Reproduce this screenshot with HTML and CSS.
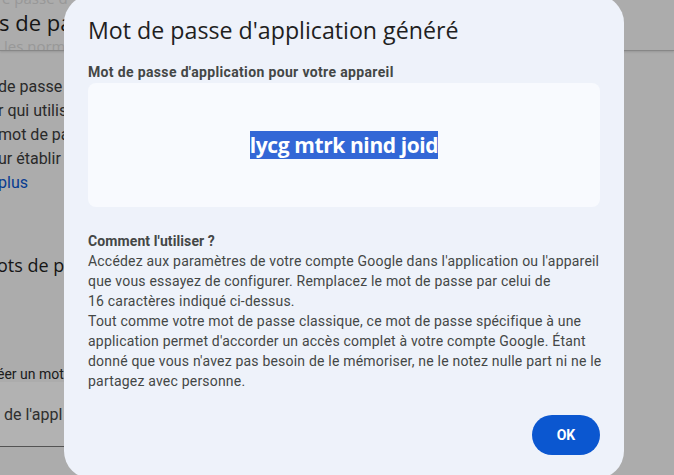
FILE: index.html
```html
<!DOCTYPE html>
<html lang="fr">
<head>
<meta charset="utf-8">
<title>Mot de passe d'application généré</title>
<link rel="stylesheet" href="styles.css">
</head>
<body>
<div class="page">
  <header class="topbar">
    <div class="ghost ghost-top">e passe d</div>
    <h1 class="page-title">s de pa</h1>
    <div class="ghost ghost-bottom">les norm</div>
  </header>
  <main class="content">
    <p class="intro">de passe<br>r qui utilis<br>mot de pas<br>ur établir<br><a class="link" href="#">plus</a></p>
    <h2 class="section-title">ots de pa</h2>
    <div class="field-label">éer un mot</div>
    <div class="field"><span class="field-text">de l'appl</span></div>
  </main>
</div>
<div class="scrim"></div>
<div class="dialog" role="dialog">
  <h2 class="dialog-title">Mot de passe d'application généré</h2>
  <div class="label">Mot de passe d'application pour votre appareil</div>
  <div class="password-box"><span class="password">lycg mtrk nind joid</span></div>
  <div class="howto">
    <div class="howto-title">Comment l'utiliser ?</div>
    <p class="howto-text">Accédez aux paramètres de votre compte Google dans l'application ou l'appareil<br>que vous essayez de configurer. Remplacez le mot de passe par celui de<br>16 caractères indiqué ci-dessus.</p>
    <p class="howto-text">Tout comme votre mot de passe classique, ce mot de passe spécifique à une<br>application permet d'accorder un accès complet à votre compte Google. Étant<br>donné que vous n'avez pas besoin de le mémoriser, ne le notez nulle part ni ne le<br>partagez avec personne.</p>
  </div>
  <div class="actions"><button class="ok-btn">OK</button></div>
</div>
</body>
</html>
```

FILE: styles.css
```css
html, body {
  margin: 0;
  padding: 0;
}
body {
  width: 674px;
  height: 475px;
  overflow: hidden;
  background: #f6f6f6;
  font-family: "Roboto", "Liberation Sans", sans-serif;
}
.page {
  height: 475px;
  overflow: hidden;
}
.topbar {
  height: 50px;
  overflow: hidden;
  border-bottom: 1px solid #c2c2c2;
  box-shadow: 0 1px 2px rgba(0,0,0,0.12);
  display: flex;
  flex-direction: column;
  white-space: nowrap;
}
.ghost {
  font-family: "Open Sans", sans-serif;
  font-size: 15px;
  line-height: 18px;
  color: #dadada;
}
.ghost-top {
  margin-top: -11px;
  padding-left: 2px;
}
.ghost-bottom {
  padding-left: 4px;
}
.page-title {
  margin: 0 0 0 -1px;
  font-family: "Open Sans", sans-serif;
  font-weight: 400;
  font-size: 22px;
  line-height: 30px;
  color: #1f1f1f;
}
.content {
  width: 560px;
  padding-top: 24px;
  white-space: nowrap;
}
.intro {
  margin: 0 0 0 -2px;
  font-family: "Roboto", sans-serif;
  font-size: 16px;
  line-height: 24px;
  color: #3c3c3c;
}
.link {
  color: #0b57d0;
  text-decoration: none;
}
.section-title {
  margin: 56px 0 0 -3px;
  font-family: "Open Sans", sans-serif;
  font-weight: 400;
  font-size: 18px;
  line-height: 28px;
  color: #1f1f1f;
}
.field-label {
  margin: 87px 0 0 -3px;
  font-family: "Roboto", sans-serif;
  font-size: 14px;
  line-height: 16px;
  color: #2a2a2a;
}
.field {
  height: 64px;
  background: #ffffff;
  border-bottom: 1px solid #777;
  display: flex;
  align-items: center;
}
.field-text {
  padding-left: 4px;
  font-family: "Roboto", sans-serif;
  font-size: 16px;
  color: #444;
}
.scrim {
  position: fixed;
  inset: 0;
  background: rgba(0, 0, 0, 0.3);
}
.dialog {
  position: fixed;
  left: 64px;
  top: -5px;
  width: 560px;
  box-sizing: border-box;
  padding: 19px 24px 24px;
  background: #eef2fa;
  border-radius: 28px;
  display: flex;
  flex-direction: column;
}
.dialog-title {
  margin: 0;
  font-family: "Open Sans", sans-serif;
  font-weight: 400;
  font-size: 23.2px;
  line-height: 32px;
  color: #1f1f1f;
}
.label {
  margin-top: 16px;
  font-weight: 700;
  font-size: 14px;
  line-height: 20px;
  letter-spacing: 0.35px;
  color: #444746;
}
.password-box {
  margin-top: 1px;
  height: 124px;
  background: #f8fafe;
  border-radius: 8px;
  display: flex;
  align-items: center;
  justify-content: center;
}
.password {
  font-family: "Open Sans", sans-serif;
  font-weight: 700;
  font-size: 21px;
  letter-spacing: -0.4px;
  color: #ffffff;
  background: #3367d6;
}
.howto {
  margin-top: 24px;
  font-size: 14px;
  line-height: 20px;
  letter-spacing: 0.2px;
  color: #444746;
  white-space: nowrap;
}
.howto-title {
  font-weight: 700;
  letter-spacing: 0.1px;
}
.howto-text {
  margin: 0;
}
.actions {
  margin-top: 24px;
  display: flex;
  justify-content: flex-end;
}
.ok-btn {
  width: 68px;
  height: 40px;
  border: none;
  border-radius: 20px;
  background: #0b57d0;
  color: #ffffff;
  font-family: "Roboto", sans-serif;
  font-weight: 700;
  font-size: 14px;
  padding: 0;
}
```
